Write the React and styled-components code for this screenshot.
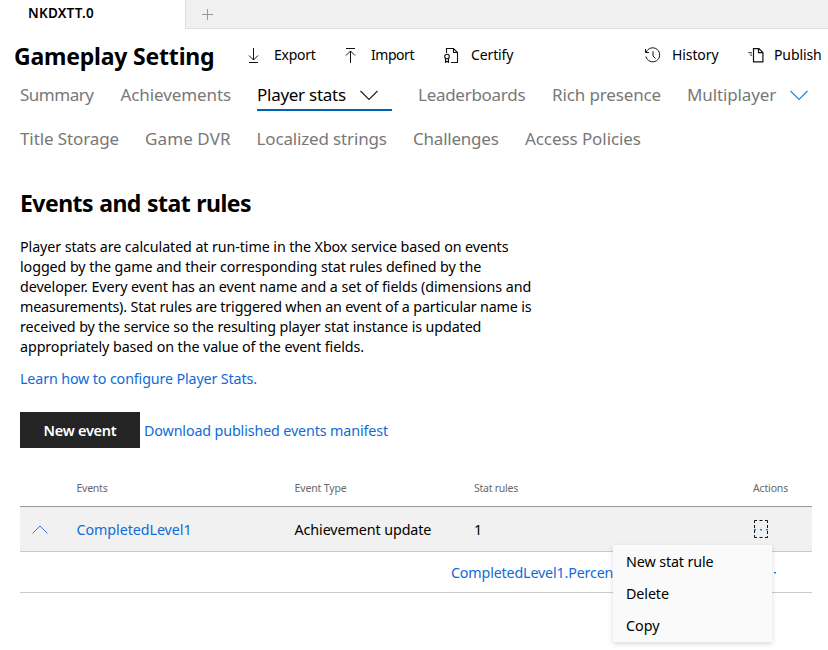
import React from "react";
import styled, { createGlobalStyle } from "styled-components";

const Global = createGlobalStyle`
  * { box-sizing: border-box; }
  body {
    margin: 0;
    background: #fff;
    color: #000;
    font-family: "Noto Sans", "Open Sans", sans-serif;
    font-size: 14.3px;
    overflow: hidden;
  }
`;

const Page = styled.div`
  width: 828px;
  height: 650px;
  overflow: hidden;
`;

const TabStrip = styled.div`
  display: flex;
  height: 29px;
`;

const ActiveTab = styled.div`
  width: 185px;
  padding-left: 28px;
  font-size: 13.5px;
  font-weight: 600;
  line-height: 26px;
  letter-spacing: 0.24px;
`;

const TabFill = styled.div`
  flex: 1;
  background: #f0f0f0;
  border-left: 1px solid #dcdcdc;
  border-bottom: 1px solid #dedede;
  padding: 9px 0 0 16px;
`;

const Header = styled.header`
  display: flex;
  align-items: center;
  height: 50px;
  padding-left: 14px;
`;

const Title = styled.h1`
  width: 232px;
  margin: 0;
  padding-top: 4px;
  font-size: 23px;
  line-height: 30px;
  letter-spacing: -0.2px;
  white-space: nowrap;
`;

const Command = styled.button`
  display: flex;
  align-items: center;
  width: ${(p) => p.$width}px;
  flex: none;
  padding: 2px 0 0;
  gap: ${(p) => p.$gap || 12}px;
  border: 0;
  background: none;
  color: #000;
  font: 14px/24px "Noto Sans", sans-serif;
  letter-spacing: ${(p) => p.$track}px;
  white-space: nowrap;
`;

const Icon = styled.svg`
  display: block;
  flex: none;
  fill: none;
  stroke: ${(p) => p.$color || "#111"};
  stroke-width: ${(p) => p.$weight || 1};
`;

const NavRow = styled.nav`
  display: flex;
  padding-left: 20px;
  height: 44px;
`;

const NavSlot = styled.div`
  width: ${(p) => p.$width}px;
  flex: none;
`;

const NavLink = styled.a`
  display: flex;
  align-items: center;
  justify-content: space-between;
  width: ${(p) => (p.$menu ? `${p.$menu}px` : "max-content")};
  padding-top: 2px;
  padding-right: ${(p) => (p.$menu ? 14 : 0)}px;
  height: 32px;
  border-bottom: 2px solid ${(p) => (p.$active ? "#0063b1" : "transparent")};
  color: ${(p) => (p.$active ? "#000" : "#787878")};
  font-size: 17px;
  line-height: 28px;
  letter-spacing: ${(p) => p.$track}px;
  white-space: nowrap;
`;

const Content = styled.main`
  padding: 21px 16px 0 20px;
`;

const Heading = styled.h2`
  margin: 0 0 19px;
  font-size: 23px;
  line-height: 30px;
  letter-spacing: -0.53px;
  word-spacing: 0.7px;
`;

const Description = styled.p`
  margin: 0;
  line-height: 20px;
`;

const Line = styled.span`
  display: block;
  white-space: nowrap;
  letter-spacing: ${(p) => p.$track}px;
`;

const Link = styled.a`
  color: #0f6bd7;
  white-space: nowrap;
  line-height: 20px;
  letter-spacing: ${(p) => p.$track}px;
`;

const LearnMore = styled.div`
  margin-top: 12px;
  height: 43px;
  line-height: 20px;
`;

const ButtonRow = styled.div`
  display: flex;
  align-items: center;
  gap: 4px;
  height: 36px;
`;

const ManifestLink = styled(Link)`
  padding-top: 2px;
`;

const PrimaryButton = styled.button`
  width: 120px;
  height: 36px;
  padding: 0;
  border: 0;
  background: #242424;
  color: #fff;
  font: 600 14.5px/36px "Noto Sans", sans-serif;
  letter-spacing: -0.26px;
`;

const Grid = styled.div`
  margin-top: 22px;
`;

const Row = styled.div`
  display: grid;
  grid-template-columns: 56.5px 218px 179.5px 279px 1fr;
  align-items: center;
`;

const HeadRow = styled(Row)`
  height: 37px;
  border-bottom: 1px solid #999;
  color: #686868;
  font-size: 10.5px;
`;

const EventRow = styled(Row)`
  height: 45px;
  background: #f1f1f1;
  border-bottom: 1px solid #cacaca;
`;

const RuleRow = styled.div`
  display: flex;
  align-items: center;
  height: 41px;
  padding-left: 431px;
  border-bottom: 1px solid #cacaca;
`;

const Cell = styled.span`
  letter-spacing: ${(p) => p.$track || 0}px;
  white-space: nowrap;
`;

const EventLink = styled(Link)`
  padding-top: 1px;
`;

const RuleLink = styled(Link)`
  width: 310px;
  padding-top: 2px;
`;

const Toggle = styled.span`
  padding-left: 12px;
`;

const ActionsCell = styled.span`
  position: relative;
`;

const Menu = styled.ul`
  position: absolute;
  left: -140px;
  top: 26px;
  z-index: 1;
  width: 159px;
  height: 97px;
  margin: 0;
  padding: 1px 0 0 13px;
  list-style: none;
  background: #fafafa;
  box-shadow: 0 2px 5px rgba(0, 0, 0, 0.15);
`;

const MenuItem = styled.li`
  line-height: 32px;
  letter-spacing: ${(p) => p.$track || 0}px;
`;

const Arrow = ({ up }) => (
  <Icon width="16" height="16" viewBox="0 0 16 16">
    {up ? (
      <path d="M3 1.5H12M7.5 16V4M3 8.5L7.5 4L12 8.5" />
    ) : (
      <path d="M3 15.5H12M7.5 1V13M3 8.5L7.5 13L12 8.5" />
    )}
  </Icon>
);

const CertifyIcon = () => (
  <Icon width="16" height="16" viewBox="0 0 16 16" $weight="1.1">
    <path d="M3.5 6V1.5H10.5L14.5 5.5V15.5H8M10.5 1.5V5.5H14.5" />
    <circle cx="4" cy="9.5" r="2.3" />
    <path d="M2.5 11.5V15.5L4 14.2L5.5 15.5V11.5" />
  </Icon>
);

const HistoryIcon = () => (
  <Icon width="17" height="16" viewBox="0 0 17 16">
    <path d="M2.2 5.2A7 7 0 1 1 1.9 9.5M1.5 2V5.5H5M9 4.3V9L11.5 11.5" />
  </Icon>
);

const PublishIcon = () => (
  <Icon width="17" height="16" viewBox="0 0 17 16" $weight="1.2">
    <path d="M6.5 1.6H11.9L15.9 5.6V14.9H6.5ZM11.5 1.6V5.6H15.9" />
    <path d="M1 5.5H5M2.5 7H5M3.5 8.5H5" stroke="#666" />
  </Icon>
);

const Chevron = ({ color }) => (
  <Icon width="18" height="11" viewBox="0 0 18 11" $color={color} $weight="1.15">
    <path d="M.5 1L9 9.5L17.5 1" />
  </Icon>
);

const Dots = ({ focused }) => (
  <Icon width="16" height="20" viewBox="0 0 16 20">
    {focused && (
      <path d="M1.5 4V1.5H4M6.5 1.5H9.5M12 1.5H14.5V4M14.5 6V9M14.5 12V15M14.5 17V18.5H12M9.5 18.5H6.5M4 18.5H1.5V16M1.5 14V11M1.5 9V6" />
    )}
    <g fill="#1673e0" stroke="none">
      <rect x="1" y="10" width="2" height="1.4" />
      <rect x="7" y="10" width="2" height="1.4" />
      <rect x="13" y="10" width="2" height="1.4" />
    </g>
  </Icon>
);

const navRows = [
  [
    { label: "Summary", width: 100.5, track: -0.5 },
    { label: "Achievements", width: 136.5, track: -0.1 },
    { label: "Player stats", width: 161, track: -0.27, menu: 135, active: true },
    { label: "Leaderboards", width: 134, track: -0.28 },
    { label: "Rich presence", width: 135, track: -0.13 },
    { label: "Multiplayer", width: 140, track: -0.13, menu: 135 },
  ],
  [
    { label: "Title Storage", width: 125, track: -0.1 },
    { label: "Game DVR", width: 111.5, track: 0.11 },
    { label: "Localized strings", width: 156.5, track: -0.15 },
    { label: "Challenges", width: 112, track: -0.22 },
    { label: "Access Policies", width: 120, track: -0.08 },
  ],
];

const description = [
  ["Player stats are calculated at run-time in the Xbox service based on events", -0.1],
  ["logged by the game and their corresponding stat rules defined by the", -0.085],
  ["developer. Every event has an event name and a set of fields (dimensions and", -0.08],
  ["measurements). Stat rules are triggered when an event of a particular name is", -0.165],
  ["received by the service so the resulting player stat instance is updated", -0.11],
  ["appropriately based on the value of the event fields.", -0.09],
];

export default function App() {
  return (
    <Page>
      <Global />
      <TabStrip>
        <ActiveTab>NKDXTT.0</ActiveTab>
        <TabFill>
          <Icon width="11" height="11" viewBox="0 0 11 11" $color="#999">
            <path d="M5.5 0V11M0 5.5H11" />
          </Icon>
        </TabFill>
      </TabStrip>
      <Header>
        <Title>Gameplay Setting</Title>
        <Command $width={97} $track={-0.25}><Arrow />Export</Command>
        <Command $width={100} $track={-0.45}><Arrow up />Import</Command>
        <Command $width={201} $track={-0.12}><CertifyIcon />Certify</Command>
        <Command $width={103} $track={-0.1} $gap={11}><HistoryIcon />History</Command>
        <Command $width={81} $track={-0.1} $gap={10}><PublishIcon />Publish</Command>
      </Header>
      {navRows.map((row, i) => (
        <NavRow key={i}>
          {row.map((item) => (
            <NavSlot key={item.label} $width={item.width}>
              <NavLink $track={item.track} $menu={item.menu} $active={item.active}>
                {item.label}
                {item.menu && <Chevron color={item.active ? "#222" : "#1b88e5"} />}
              </NavLink>
            </NavSlot>
          ))}
        </NavRow>
      ))}
      <Content>
        <Heading>Events and stat rules</Heading>
        <Description>
          {description.map(([text, track]) => (
            <Line key={text} $track={track}>{text}</Line>
          ))}
        </Description>
        <LearnMore>
          <Link $track={-0.14}>Learn how to configure Player Stats.</Link>
        </LearnMore>
        <ButtonRow>
          <PrimaryButton>New event</PrimaryButton>
          <ManifestLink $track={-0.13}>Download published events manifest</ManifestLink>
        </ButtonRow>
        <Grid>
          <HeadRow>
            <span />
            <Cell $track={-0.24}>Events</Cell>
            <Cell $track={-0.14}>Event Type</Cell>
            <Cell $track={-0.24}>Stat rules</Cell>
            <Cell $track={-0.15}>Actions</Cell>
          </HeadRow>
          <EventRow>
            <Toggle>
              <Icon width="16" height="9" viewBox="0 0 16 9" $color="#2f78d8">
                <path d="M.5 8.5L8 1L15.5 8.5" />
              </Icon>
            </Toggle>
            <EventLink $track={-0.07}>CompletedLevel1</EventLink>
            <Cell $track={-0.09}>Achievement update</Cell>
            <Cell>1</Cell>
            <ActionsCell>
              <Dots focused />
              <Menu>
                <MenuItem $track={-0.11}>New stat rule</MenuItem>
                <MenuItem $track={-0.1}>Delete</MenuItem>
                <MenuItem>Copy</MenuItem>
              </Menu>
            </ActionsCell>
          </EventRow>
          <RuleRow>
            <RuleLink $track={-0.17}>CompletedLevel1.Percen</RuleLink>
            <Dots />
          </RuleRow>
        </Grid>
      </Content>
    </Page>
  );
}
